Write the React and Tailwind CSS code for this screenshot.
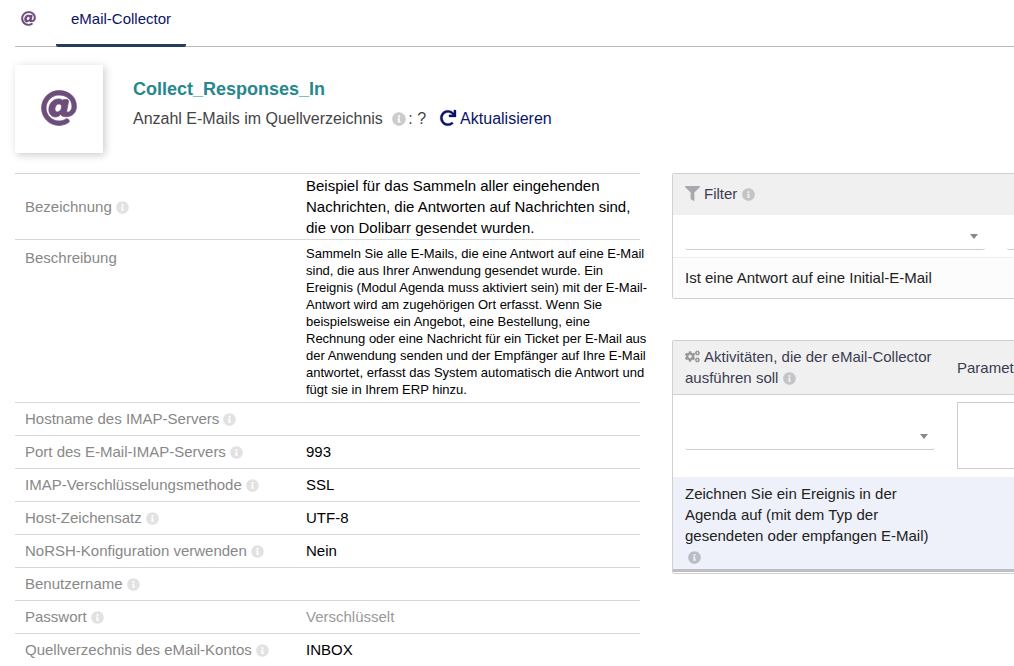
import { useState } from "react";
import { FaAt, FaCogs, FaFilter, FaInfoCircle, FaRedo } from "react-icons/fa";

const settings = [
    { label: "Hostname des IMAP-Servers", value: "" },
    { label: "Port des E-Mail-IMAP-Servers", value: "993" },
    { label: "IMAP-Verschlüsselungsmethode", value: "SSL" },
    { label: "Host-Zeichensatz", value: "UTF-8" },
    { label: "NoRSH-Konfiguration verwenden", value: "Nein" },
    { label: "Benutzername", value: "" },
    { label: "Passwort", value: "Verschlüsselt", muted: true },
    { label: "Quellverzechnis des eMail-Kontos", value: "INBOX" },
];

function Info({ className = "size-[13px] text-[#e2e2e2]" }) {
    return <FaInfoCircle className={`inline-block align-[-2px] ${className}`} />;
}

function Select({ label, className }) {
    const [value, setValue] = useState("");

    return (
        <div className={`relative ${className}`}>
            <select
                aria-label={label}
                value={value}
                onChange={(e) => setValue(e.target.value)}
                className="block h-7 w-full appearance-none rounded-[3px] border-b border-[#ccc] bg-transparent pr-6 outline-none"
            >
                <option value=""></option>
            </select>
            <svg viewBox="0 0 8 5" className="pointer-events-none absolute top-3 right-[7px] h-[5px] w-2 fill-[#888]">
                <path d="M0 0h8L4 5z" />
            </svg>
        </div>
    );
}

function Tabs() {
    return (
        <nav className="flex h-[47px] items-end border-b border-[#bbb] pl-[6px]">
            <a href="#" aria-label="Übersicht" className="mr-[20px] flex h-full items-center pb-[9px] text-[#6c4d7b]">
                <FaAt className="size-[15px] overflow-visible" strokeWidth="6" />
            </a>
            <a href="#" className="-mb-px h-[47px] rounded-[2px] border-b-3 border-[#263c5c] px-[15px] pt-[9px] leading-5 text-[#0a1464]">
                eMail-Collector
            </a>
        </nav>
    );
}

function Banner() {
    return (
        <div className="flex pt-[18px]">
            <div className="flex size-[88px] items-center justify-center bg-white pb-[2px] text-[#6c4d7b] shadow-[2px_2px_8px_#ccc]">
                <FaAt className="size-9 overflow-visible" strokeWidth="10" />
            </div>
            <div className="ml-[30px] pt-3">
                <h1 className="text-lg leading-6 font-bold text-[#25888c]">Collect_Responses_In</h1>
                <div className="mt-[6px] text-base leading-6 text-[#444]">
                    Anzahl E-Mails im Quellverzeichnis{" "}
                    <Info className="mr-[2px] ml-[5px] size-[14px] text-[#ccc]" />: ?
                    <button type="button" className="ml-[14px] cursor-pointer text-[#0a1464]">
                        <FaRedo className="mr-1 inline-block size-4 overflow-visible align-[-2px]" strokeWidth="10" />
                        Aktualisieren
                    </button>
                </div>
            </div>
        </div>
    );
}

function Details() {
    return (
        <table className="w-full table-fixed border-t border-[#d4d4d4]">
            <colgroup>
                <col className="w-[281px]" />
                <col />
            </colgroup>
            <tbody>
                <tr className="h-[66px] border-b border-[#d8d8d8]">
                    <th scope="row" className="px-[10px] text-left font-normal text-[#888]">
                        Bezeichnung <Info />
                    </th>
                    <td className="pl-[10px] leading-[21px] text-black">
                        Beispiel für das Sammeln aller eingehenden Nachrichten, die Antworten auf Nachrichten sind, die von
                        Dolibarr gesendet wurden.
                    </td>
                </tr>
                <tr className="h-[163px] border-b border-[#d8d8d8]">
                    <th scope="row" className="px-[10px] pt-2 text-left align-top font-normal text-[#888]">
                        Beschreibung
                    </th>
                    <td className="pl-[10px] text-[13px] leading-[17px] text-black">
                        <p className="-mr-2">
                            Sammeln Sie alle E-Mails, die eine Antwort auf eine E-Mail sind, die aus Ihrer Anwendung
                            gesendet wurde. Ein Ereignis (Modul Agenda muss aktiviert sein) mit der E-Mail-Antwort wird am
                            zugehörigen Ort erfasst. Wenn Sie beispielsweise ein Angebot, eine Bestellung, eine Rechnung
                            oder eine Nachricht für ein Ticket per E-Mail aus der Anwendung senden und der Empfänger auf
                            Ihre E-Mail antwortet, erfasst das System automatisch die Antwort und fügt sie in Ihrem ERP
                            hinzu.
                        </p>
                    </td>
                </tr>
                {settings.map((row) => (
                    <tr key={row.label} className="h-[33px] border-b border-[#d8d8d8]">
                        <th scope="row" className="px-[10px] text-left font-normal text-[#888]">
                            {row.label} <Info />
                        </th>
                        <td className={row.muted ? "pl-[10px] text-[#999]" : "pl-[10px] text-black"}>{row.value}</td>
                    </tr>
                ))}
            </tbody>
        </table>
    );
}

function Filters() {
    return (
        <div className="rounded-[2px] border border-[#d0d0d0]">
            <table className="w-full table-fixed">
                <colgroup>
                    <col className="w-[322px]" />
                    <col />
                </colgroup>
                <thead>
                    <tr className="h-[41px] bg-[#f0f0f0] text-[#3c3c50]">
                        <th scope="col" colSpan={2} className="px-3 pb-px text-left font-normal">
                            <FaFilter className="mr-1 inline-block size-[15px] align-[-2px] text-[#a8a8ae]" />
                            Filter <Info className="size-[13px] text-[#c4c4c8]" />
                        </th>
                    </tr>
                </thead>
                <tbody>
                    <tr className="h-[42px] border-b border-[#eee]">
                        <td className="pl-3">
                            <Select label="Filter" className="w-[300px]" />
                        </td>
                        <td className="px-3">
                            <input aria-label="Filterwert" className="block h-7 w-full rounded-[3px] border-b border-[#ccc] outline-none" />
                        </td>
                    </tr>
                    <tr className="h-[41px] bg-[#fcfcfc] text-[#222]">
                        <td colSpan={2} className="px-3">
                            Ist eine Antwort auf eine Initial-E-Mail
                        </td>
                    </tr>
                </tbody>
            </table>
        </div>
    );
}

function Operations() {
    return (
        <div className="rounded-[2px] border border-[#d0d0d0] pb-px">
            <table className="w-full table-fixed">
                <colgroup>
                    <col className="w-[272px]" />
                    <col />
                </colgroup>
                <thead>
                    <tr className="h-[53px] border-b border-[#d0d0d0] bg-[#f0f0f0] leading-[21px] text-[#3c3c50]">
                        <th scope="col" className="pr-2 pl-3 text-left font-normal">
                            <FaCogs className="mr-1 inline-block size-[15px] align-[-2px] text-[#999]" />
                            Aktivitäten, die der eMail-Collector ausführen soll <Info className="size-[13px] text-[#c4c4c8]" />
                        </th>
                        <th scope="col" className="px-3 text-left font-normal">
                            Parameter
                        </th>
                    </tr>
                </thead>
                <tbody>
                    <tr className="h-[83px]">
                        <td className="pl-3">
                            <Select label="Aktivität" className="w-[250px]" />
                        </td>
                        <td className="px-3">
                            <textarea aria-label="Parameter" className="block h-[67px] w-full resize-none border border-[#ccc] outline-none" />
                        </td>
                    </tr>
                    <tr className="border-b-3 border-[#bbbec4] bg-[#eef1f9] leading-[21px] text-[#222]">
                        <td className="pt-[6px] pr-2 pb-[2px] pl-3">
                            Zeichnen Sie ein Ereignis in der Agenda auf (mit dem Typ der gesendeten oder empfangen E-Mail){" "}
                            <Info className="ml-[3px] size-[13px] text-[#bbbcc4]" />
                        </td>
                        <td></td>
                    </tr>
                </tbody>
            </table>
        </div>
    );
}

export default function App() {
    return (
        <div className="overflow-x-hidden bg-white font-['Liberation_Sans',Arial,sans-serif] text-[15px] leading-5">
            <main className="min-w-[1312px] px-[15px]">
                <Tabs />
                <Banner />
                <div className="mt-5 flex gap-8">
                    <section className="min-w-0 flex-1">
                        <Details />
                    </section>
                    <section className="flex min-w-0 flex-1 flex-col gap-[41px]">
                        <Filters />
                        <Operations />
                    </section>
                </div>
            </main>
        </div>
    );
}
